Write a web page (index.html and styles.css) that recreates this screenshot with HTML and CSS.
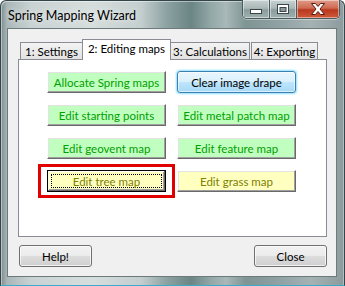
FILE: index.html
```html
<!DOCTYPE html>
<html>
<head>
<meta charset="utf-8">
<link rel="stylesheet" href="styles.css">
</head>
<body>
<div class="window">
  <div class="titlebar">
    <span class="title">Spring Mapping Wizard</span>
    <div class="caption">
      <div class="cbtn cmin"><svg width="12" height="5" viewBox="0 0 12 5"><rect x="0.5" y="0.5" width="11" height="4" fill="#fff" stroke="#3a4648"/></svg></div>
      <div class="cbtn cmax"><svg width="12" height="10" viewBox="0 0 12 10"><rect x="0.5" y="0.5" width="11" height="9" fill="#fff" stroke="#3a4648"/><rect x="3" y="3.5" width="6" height="4" fill="#8c9a9c" stroke="#3a4648"/></svg></div>
      <div class="cbtn cclose"><svg width="16" height="12" viewBox="0 0 16 12"><path d="M1.5 0.5 H5.5 L8 3.5 L10.5 0.5 H14.5 L10 6 L14.5 11.5 H10.5 L8 8.5 L5.5 11.5 H1.5 L6 6 Z" fill="#fff" stroke="#5a1a10" stroke-width="1" stroke-linejoin="round"/></svg></div>
    </div>
  </div>
  <div class="client">
    <div class="tabctl">
      <div class="tabstrip">
        <div class="tab t1">1: Settings</div>
        <div class="tab t2 active">2: Editing maps</div>
        <div class="tab t3">3: Calculations</div>
        <div class="tab t4">4: Exporting</div>
      </div>
      <div class="panel">
        <div class="grid">
          <div class="btn green">Allocate Spring maps</div>
          <div class="btn blue">Clear image drape</div>
          <div class="btn green">Edit starting points</div>
          <div class="btn green">Edit metal patch map</div>
          <div class="btn green">Edit geovent map</div>
          <div class="btn green">Edit feature map</div>
          <div class="btn yellow focused"><span class="focusrect">Edit tree map</span></div>
          <div class="btn yellow">Edit grass map</div>
        </div>
        <div class="highlight"></div>
      </div>
    </div>
    <div class="footer">
      <div class="vbtn">Help!</div>
      <div class="vbtn">Close</div>
    </div>
  </div>
</div>
</body>
</html>
```
FILE: styles.css
```css
html, body {
  margin: 0;
  padding: 0;
  width: 345px;
  height: 286px;
  overflow: hidden;
  background: #fff;
}
.window {
  box-sizing: border-box;
  width: 345px;
  height: 286px;
  border: 1px solid #34454a;
  border-bottom-color: #3fa9c8;
  border-radius: 6px 6px 0 0;
  background:
    linear-gradient(90deg,
      #7d8d90 0px, #a9b6b8 6px, #c9d2d2 30px, #d6dddd 90px, #c4cece 140px,
      #8ea3a3 165px, #6a8584 190px, #93a8a8 210px, #a9b8b8 225px,
      #7f9494 245px, #8ea0a2 275px, #a5b2b4 310px, #8a9a9c 345px);
  box-shadow: inset 1px 1px 0 rgba(255,255,255,0.45), inset -1px 0 0 rgba(255,255,255,0.35);
  display: flex;
  flex-direction: column;
  font-family: "Lato", "Noto Sans", sans-serif;
}
.titlebar {
  height: 27px;
  display: flex;
  justify-content: space-between;
  align-items: flex-start;
  padding-left: 7px;
}
.title {
  font-family: "Lato", sans-serif;
  font-size: 12.5px;
  color: #000;
  margin-top: 7px;
  text-shadow: 0 0 6px rgba(255,255,255,0.9);
}
.caption {
  display: flex;
  margin-right: 4px;
  margin-top: -1px;
  height: 18px;
  border: 1px solid #4b5a5c;
  border-top: none;
  border-radius: 0 0 5px 5px;
  overflow: hidden;
  box-shadow: 0 1px 0 rgba(255,255,255,0.4);
}
.cbtn {
  height: 18px;
  display: flex;
  align-items: center;
  justify-content: center;
  box-shadow: inset 0 0 0 1px rgba(255,255,255,0.45);
}
.cmin, .cmax {
  width: 26px;
  background: linear-gradient(#c8d2d2 0%, #aab8b8 45%, #8a9c9c 55%, #9fb0b0 100%);
  border-right: 1px solid #4b5a5c;
}
.cmin svg { margin-top: 5px; }
.cclose {
  width: 42px;
  background: linear-gradient(#e09a88 0%, #cf6a52 45%, #b8381e 55%, #d05a3a 100%);
}
.client {
  flex: 1;
  margin: 0 7px 8px 6px;
  background: #f0f0f0;
  border: 1px solid #6c7a7c;
  display: flex;
  flex-direction: column;
  padding: 10px 9px 0 10px;
}
.tabctl {
  display: flex;
  flex-direction: column;
}
.tabstrip {
  display: flex;
  align-items: flex-end;
  height: 20px;
  padding-left: 2px;
}
.tab {
  box-sizing: border-box;
  height: 17px;
  border: 1px solid #898c95;
  border-bottom: none;
  background: linear-gradient(#f3f3f3, #e2e2e2);
  font-size: 11.5px;
  color: #000;
  display: flex;
  align-items: center;
  justify-content: center;
  padding-top: 1px;
  margin-left: -1px;
  white-space: nowrap;
}
.t1 { width: 63px; margin-left: 0; }
.t2 { width: 89px; }
.t3 { width: 80px; }
.t4 { width: 67px; margin-left: 1px; }
.tab.active {
  height: 21px;
  margin-bottom: -1px;
  background: #fff;
  position: relative;
  z-index: 1;
  padding-top: 0;
  padding-bottom: 3px;
}
.panel {
  position: relative;
  box-sizing: border-box;
  height: 178px;
  background: #fff;
  border: 1px solid #898c95;
  padding: 11px 0 0 28px;
}
.grid {
  display: grid;
  grid-template-columns: 119px 119px;
  grid-auto-rows: 22px;
  column-gap: 11px;
  row-gap: 11px;
}
.btn {
  box-sizing: border-box;
  font-size: 11.5px;
  display: flex;
  align-items: center;
  justify-content: center;
  border: 1px solid;
  border-color: #ffffff #696969 #696969 #ffffff;
  box-shadow: inset -1px -1px 0 #a0a0a0, inset 1px 1px 0 #e3e3e3;
  white-space: nowrap;
}
.green {
  background: #c0ffc0;
  color: #00a000;
}
.yellow {
  background: #ffffc0;
  color: #808000;
}
.blue {
  border: 1px solid #3c7fb1;
  border-radius: 3px;
  background: linear-gradient(#eaf6fd 0%, #d9f0fc 50%, #bee6fd 51%, #a7d9f5 100%);
  box-shadow: 0 0 2px 1px #8ee0ff, inset 0 0 0 1px rgba(255,255,255,0.6);
  color: #000;
}
.focused {
  border: 1px solid #000;
  box-shadow: inset -1px -1px 0 #696969, inset 1px 1px 0 #ffffff, inset -2px -2px 0 #a0a0a0;
  padding: 3px;
}
.focusrect {
  flex: 1;
  align-self: stretch;
  display: flex;
  align-items: center;
  justify-content: center;
  border: 1px dotted #000;
}
.highlight {
  position: absolute;
  left: 19px;
  top: 104px;
  width: 137px;
  height: 34px;
  box-sizing: border-box;
  border: 3px solid #e00000;
}
.footer {
  display: flex;
  justify-content: space-between;
  margin-top: 8px;
  padding: 0 0 0 1px;
}
.vbtn {
  box-sizing: border-box;
  width: 73px;
  height: 22px;
  border: 1px solid #707070;
  border-radius: 3px;
  background: linear-gradient(#f2f2f2 0%, #ebebeb 50%, #dddddd 51%, #cfcfcf 100%);
  box-shadow: inset 0 0 0 1px rgba(255,255,255,0.7);
  font-size: 11.5px;
  color: #000;
  display: flex;
  align-items: center;
  justify-content: center;
}
```
